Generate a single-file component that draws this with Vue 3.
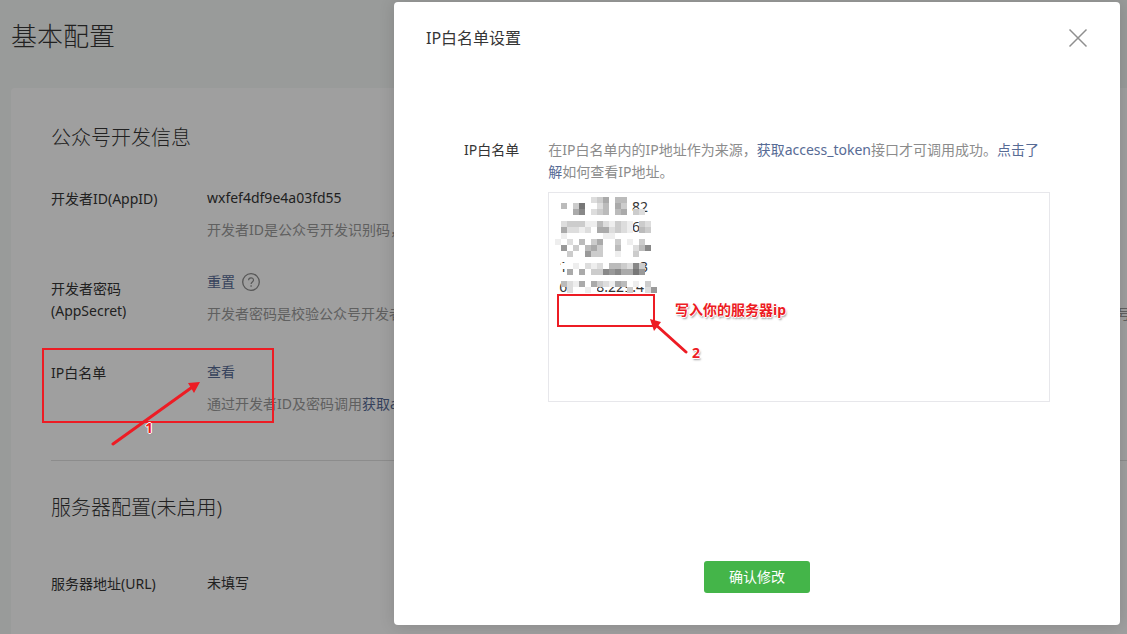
<script setup>
import { ref } from 'vue'

const ipList = ref(
  [
    ' '.repeat(20) + '82',
    ' '.repeat(20) + '66',
    '',
    '1' + ' '.repeat(20) + '3',
    '6' + ' '.repeat(8) + '8.229.4',
  ].join('\n')
)

// One string per row of 6px blocks: hex digit = grey level, "." = clear.
const mosaic = [
  '......dca.bb.....',
  '.bfc7..db.ac.....',
  '.f.a8.dcb.ba.cd..',
  '.................',
  '.dccceebdecde.cd.',
  '.addedfaadcde.bc.',
  '.e......eef.f....',
  'e.d.bfcaf.cfe.c..',
  '.9fcfbac..bf.db8.',
  '..c..9cc..ef.cf..',
  '..........ff.....',
  '.ffe.dedfbbcd8c..',
  '..afafcc898aa79..',
  '.................',
  '.bdea.acdeabfefc.',
  '..df.ef.....c..d9',
]
const blocks = mosaic.flatMap((row, y) =>
  [...row].flatMap((level, x) =>
    level === '.' ? [] : [{ x: x * 6, y: y * 6, fill: `#${level.repeat(3)}` }]
  )
)
</script>

<template>
  <div class="page">
    <h1>基本配置</h1>
    <main class="card">
      <section>
        <h2>公众号开发信息</h2>
        <dl>
          <div class="row">
            <dt>开发者ID(AppID)</dt>
            <dd>
              <p>wxfef4df9e4a03fd55</p>
              <p class="tip">开发者ID是公众号开发识别码，配合开发者密码可调用公众号的接口能力。</p>
            </dd>
          </div>
          <div class="row">
            <dt class="low">开发者密码<br />(AppSecret)</dt>
            <dd>
              <p class="action">
                <a href="#">重置</a>
                <svg class="help" width="18" height="18" viewBox="0 0 18 18" fill="none" stroke="#8c8c8c">
                  <circle cx="9" cy="9" r="8.3" stroke-width="1.3" />
                  <path d="M6.6 7.2C6.6 4 11.5 4.1 11.5 7C11.5 9 9.1 8.9 9.1 11" stroke-width="1.2" />
                  <path d="M9.1 12.2v1.5" stroke-width="1.3" />
                </svg>
              </p>
              <p class="tip">开发者密码是校验公众号开发者身份的密码，具有极高的安全性。切记勿把密码直接交给第三方开发者或直接存储在代码中。如需第三方代开发公众号，请使用授权方式接入。</p>
            </dd>
          </div>
          <div class="row">
            <dt>IP白名单</dt>
            <dd>
              <p><a href="#">查看</a></p>
              <p class="tip">通过开发者ID及密码调用<a href="#">获取access_token</a>接口时，需要设置访问来源IP为白名单。</p>
            </dd>
          </div>
        </dl>
      </section>
      <section class="server">
        <h2>服务器配置(未启用)</h2>
        <dl>
          <div class="row">
            <dt>服务器地址(URL)</dt>
            <dd><p>未填写</p></dd>
          </div>
        </dl>
      </section>
    </main>

    <div class="mask">
      <form class="dialog" role="dialog" aria-labelledby="dialog-title" @submit.prevent>
        <header>
          <h3 id="dialog-title">IP白名单设置</h3>
          <button class="close" type="button" aria-label="关闭">
            <svg width="20" height="20" viewBox="0 0 20 20" stroke="#8f8f8f" stroke-width="1.5">
              <path d="M1.5 1.5L18.5 18.5M18.5 1.5L1.5 18.5" />
            </svg>
          </button>
        </header>
        <div class="field">
          <label for="ip-list">IP白名单</label>
          <div class="control">
            <p>在IP白名单内的IP地址作为来源，<a href="#">获取access_token</a>接口才可调用成功。<a href="#">点击了解</a>如何查看IP地址。</p>
            <div class="box">
              <textarea id="ip-list" v-model="ipList" spellcheck="false"></textarea>
              <svg class="mosaic" width="102" height="96" viewBox="0 0 102 96" shape-rendering="crispEdges">
                <path d="M12 84h78v6H12z" fill="#fff" />
                <rect v-for="(b, i) in blocks" :key="i" :x="b.x" :y="b.y" width="6" height="6" :fill="b.fill" />
              </svg>
            </div>
          </div>
        </div>
        <footer><button class="submit" type="submit">确认修改</button></footer>
      </form>
    </div>

    <svg class="marks" width="820" height="460" viewBox="0 0 820 460" fill="none" stroke="#ed1c24">
      <path d="M43 349H273V422H43ZM558 295H654V326H558Z" stroke-width="2" />
      <path d="M113 444L191 388M686 352L656 325" stroke-width="3" stroke-linecap="round" />
      <path d="M200 382L188 383L191 388L194 393ZM650 319L661 322L658 326L654 331Z" fill="#ed1c24" stroke="none" />
    </svg>
    <span class="note one">1</span>
    <span class="note two">2</span>
    <span class="note hint">写入你的服务器ip</span>
  </div>
</template>

<style>
body {
  margin: 0;
}
</style>

<style scoped>
.page {
  position: relative;
  box-sizing: border-box;
  height: 100vh;
  overflow: hidden;
  padding: 16px 0 0 11px;
  background: #f6f8f7;
  color: #353535;
  font: 14px/22px "Noto Sans", "Noto Sans CJK SC", sans-serif;
}
h1, h2, h3, p, dl, dd {
  margin: 0;
  font-weight: 400;
}
h1 {
  margin-bottom: 32px;
  font-size: 26px;
  line-height: 40px;
  font-weight: 300;
}
h2 {
  font-size: 20px;
  line-height: 30px;
  font-weight: 300;
}
a {
  color: #576b95;
  text-decoration: none;
}
.card {
  min-height: 100vh;
  padding: 35px 0 0 40px;
  border-radius: 4px 0 0 0;
  background: #fff;
  white-space: nowrap;
}
dl {
  display: grid;
  gap: 30px;
  padding-top: 34px;
}
.row {
  display: grid;
  grid-template-columns: 156px 1fr;
}
.row:nth-child(3) {
  margin-top: 6px;
}
dt {
  padding-top: 1px;
}
dt.low {
  padding-top: 7px;
}
dd {
  display: grid;
  gap: 10px;
  min-width: 0;
  align-content: start;
}
.action {
  display: flex;
  align-items: center;
  gap: 7px;
}
.tip {
  color: #9a9a9a;
}
.server {
  margin-top: 45px;
  padding-top: 32px;
  border-top: 1px solid #e0e0e0;
}
.server dl {
  padding-top: 49px;
}
.mask {
  position: absolute;
  inset: 0;
  padding: 2px 7px 9px 394px;
  background: rgba(0, 0, 0, 0.376);
}
.dialog {
  display: flex;
  flex-direction: column;
  box-sizing: border-box;
  height: 100%;
  padding: 20px 32px 32px;
  border-radius: 4px;
  background: #fff;
  box-shadow: 0 1px 16px rgba(0, 0, 0, 0.14);
}
header {
  display: flex;
  align-items: center;
  justify-content: space-between;
}
h3 {
  font-size: 16px;
  line-height: 32px;
}
.close {
  display: flex;
  padding: 0;
  border: 0;
  background: none;
}
.field {
  display: flex;
  gap: 29px;
  padding: 85px 38px 0 38px;
}
.field label {
  flex: none;
}
.control {
  flex: 1;
  color: #8c8c8c;
}
.control p {
  padding-right: 8px;
}
.box {
  position: relative;
  margin-top: 9px;
}
textarea {
  display: block;
  box-sizing: border-box;
  width: 100%;
  height: 210px;
  padding: 4px 10px;
  border: 1px solid #e7e7eb;
  outline: 0;
  resize: none;
  background: #fff;
  color: #353535;
  font: inherit;
  line-height: 20px;
}
.mosaic {
  position: absolute;
  top: 5px;
  left: 7px;
  pointer-events: none;
}
footer {
  margin-top: auto;
  text-align: center;
}
.submit {
  display: inline-block;
  min-width: 106px;
  height: 32px;
  padding: 0 22px;
  border: 0;
  border-radius: 3px;
  background: #44b549;
  color: #fff;
  font: inherit;
  vertical-align: top;
}
.marks {
  position: absolute;
  top: 0;
  left: 0;
  pointer-events: none;
}
.note {
  position: absolute;
  color: #ed1c24;
  font-weight: 700;
  line-height: 20px;
  white-space: nowrap;
  text-shadow: 1px 0 #fff, -1px 0 #fff, 0 1px #fff, 0 -1px #fff, 1px 2px 2px #999;
}
.one {
  top: 418px;
  left: 145px;
}
.two {
  top: 343px;
  left: 692px;
}
.hint {
  top: 300px;
  left: 675px;
}
</style>
